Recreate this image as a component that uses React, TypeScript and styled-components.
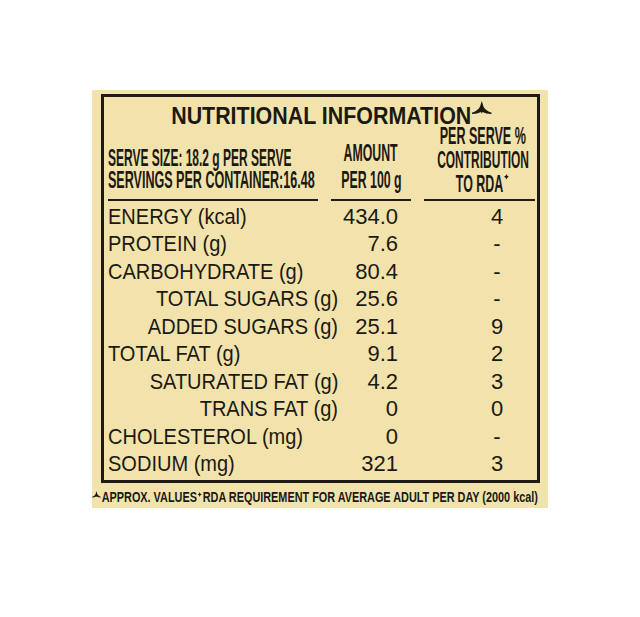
import React from "react";
import styled, { createGlobalStyle } from "styled-components";

const INK = "#1c1913";

const GlobalStyle = createGlobalStyle`
  html, body { margin: 0; padding: 0; background: #ffffff; }
  body { font-family: "Liberation Sans", Arial, sans-serif; }
`;

const Page = styled.div`
  width: 640px;
  height: 617px;
  box-sizing: border-box;
  padding: 90px 0 0 92px;
`;

const Label = styled.section`
  width: 456px;
  height: 418px;
  box-sizing: border-box;
  background: #f1e3ab;
  padding-top: 4px;
  color: ${INK};
  display: flex;
  flex-direction: column;
`;

const Frame = styled.div`
  margin-left: 9px;
  width: 439px;
  height: 389px;
  box-sizing: border-box;
  border: 3px solid #1e1b14;
  padding: 10px 2px 0 4px;
  display: flex;
  flex-direction: column;
`;

const Title = styled.h1`
  margin: 0;
  font-size: 24px;
  font-weight: 700;
  line-height: 17px;
  text-align: center;
  white-space: nowrap;
`;

const TitleText = styled.span`
  display: inline-block;
  position: relative;
  transform: scaleX(0.892);
  transform-origin: center;
`;

const TitleMark = styled.svg`
  position: absolute;
  left: calc(100% + 1px);
  top: -6px;
  width: 22.4px;
  height: 13px;
`;

const HeadGrid = styled.div`
  display: grid;
  grid-template-columns: 210px 80px 111px;
  column-gap: 13px;
`;

const HeadCell = styled.div<{ $center?: boolean; $pad: number; $lh: number; $shift?: number }>`
  display: flex;
  flex-direction: column;
  justify-content: flex-end;
  align-items: ${(p) => (p.$center ? "center" : "flex-start")};
  border-bottom: 2px solid #1e1b14;
  padding-bottom: ${(p) => p.$pad}px;
  padding-left: ${(p) => p.$shift ?? 0}px;
  font-size: 23.5px;
  font-weight: 700;
  line-height: ${(p) => p.$lh}px;
`;

const HeadLine = styled.span<{ $scale: number; $center?: boolean }>`
  display: block;
  white-space: nowrap;
  transform: scaleX(${(p) => p.$scale});
  transform-origin: ${(p) => (p.$center ? "center" : "left")} center;
`;

const Rows = styled.div`
  padding-top: 1.5px;
  display: flex;
  flex-direction: column;
`;

const Row = styled.div`
  display: grid;
  grid-template-columns: 230px 60px 1fr;
  height: 27.5px;
  line-height: 27.5px;
  font-size: 22px;
  align-items: center;
`;

const Name = styled.span<{ $indent?: boolean }>`
  justify-self: ${(p) => (p.$indent ? "end" : "start")};
  white-space: nowrap;
  transform: scaleX(0.91);
  transform-origin: ${(p) => (p.$indent ? "right" : "left")} center;
`;

const Amount = styled.span`
  justify-self: end;
  white-space: nowrap;
`;

const Rda = styled.span`
  padding-left: 61px;
  text-align: center;
`;

const Footnote = styled.p`
  margin: 5.5px 0 0 0;
  font-size: 14px;
  font-weight: 700;
  line-height: 16px;
  white-space: nowrap;
  transform: scaleX(0.776);
  transform-origin: left center;
`;

const SmallMark = styled.svg`
  width: 11.5px;
  height: 6.5px;
  vertical-align: 4px;
  margin-right: 1px;
`;

const Star = styled.svg<{ $w: number; $h: number; $lift: number }>`
  width: ${(p) => p.$w}px;
  height: ${(p) => p.$h}px;
  vertical-align: ${(p) => p.$lift}px;
  margin: 0 1px;
`;

const MARK_PATH =
  "M10 0 L11.8 5.8 Q14 9.8 20 11.8 L19.6 13 Q14.2 12.6 10.8 10.9 L10 12.4 L9.2 10.9 Q5.8 12.6 0.4 13 L0 11.8 Q6 9.8 8.2 5.8 Z";
const STAR_PATH = "M5 0 Q5.7 4.3 10 5 Q5.7 5.7 5 10 Q4.3 5.7 0 5 Q4.3 4.3 5 0 Z";

const Mark = ({ as: Comp }: { as: typeof TitleMark | typeof SmallMark }) => (
  <Comp viewBox="0 0 20 13" preserveAspectRatio="none">
    <path d={MARK_PATH} fill={INK} />
  </Comp>
);

const StarIcon = ({ w, h, lift }: { w: number; h: number; lift: number }) => (
  <Star $w={w} $h={h} $lift={lift} viewBox="0 0 10 10" preserveAspectRatio="none">
    <path d={STAR_PATH} fill={INK} />
  </Star>
);

type Nutrient = { name: string; amount: string; rda: string; indent?: boolean };

const NUTRIENTS: Nutrient[] = [
  { name: "ENERGY (kcal)", amount: "434.0", rda: "4" },
  { name: "PROTEIN (g)", amount: "7.6", rda: "-" },
  { name: "CARBOHYDRATE (g)", amount: "80.4", rda: "-" },
  { name: "TOTAL SUGARS (g)", amount: "25.6", rda: "-", indent: true },
  { name: "ADDED SUGARS (g)", amount: "25.1", rda: "9", indent: true },
  { name: "TOTAL FAT (g)", amount: "9.1", rda: "2" },
  { name: "SATURATED FAT (g)", amount: "4.2", rda: "3", indent: true },
  { name: "TRANS FAT (g)", amount: "0", rda: "0", indent: true },
  { name: "CHOLESTEROL (mg)", amount: "0", rda: "-" },
  { name: "SODIUM (mg)", amount: "321", rda: "3" },
];

export default function App() {
  return (
    <>
      <GlobalStyle />
      <Page>
        <Label>
          <Frame>
            <Title>
              <TitleText>
                NUTRITIONAL INFORMATION
                <Mark as={TitleMark} />
              </TitleText>
            </Title>
            <HeadGrid>
              <HeadCell $pad={8} $lh={22}>
                <HeadLine $scale={0.51}>SERVE SIZE: 18.2 g PER SERVE</HeadLine>
                <HeadLine $scale={0.534}>SERVINGS PER CONTAINER:16.48</HeadLine>
              </HeadCell>
              <HeadCell $center $pad={5} $lh={27}>
                <HeadLine $center $scale={0.524}>AMOUNT</HeadLine>
                <HeadLine $center $scale={0.524}>PER 100 g</HeadLine>
              </HeadCell>
              <HeadCell $center $pad={3} $lh={24} $shift={7}>
                <HeadLine $center $scale={0.534}>PER SERVE %</HeadLine>
                <HeadLine $center $scale={0.51}>CONTRIBUTION</HeadLine>
                <HeadLine $center $scale={0.529}>
                  TO RDA
                  <StarIcon w={9.5} h={5.5} lift={12.5} />
                </HeadLine>
              </HeadCell>
            </HeadGrid>
            <Rows>
              {NUTRIENTS.map((n) => (
                <Row key={n.name}>
                  <Name $indent={n.indent}>{n.name}</Name>
                  <Amount>{n.amount}</Amount>
                  <Rda>{n.rda}</Rda>
                </Row>
              ))}
            </Rows>
          </Frame>
          <Footnote>
            <Mark as={SmallMark} />
            APPROX. VALUES
            <StarIcon w={5.5} h={5} lift={5} />
            RDA REQUIREMENT FOR AVERAGE ADULT PER DAY (2000 kcal)
          </Footnote>
        </Label>
      </Page>
    </>
  );
}
